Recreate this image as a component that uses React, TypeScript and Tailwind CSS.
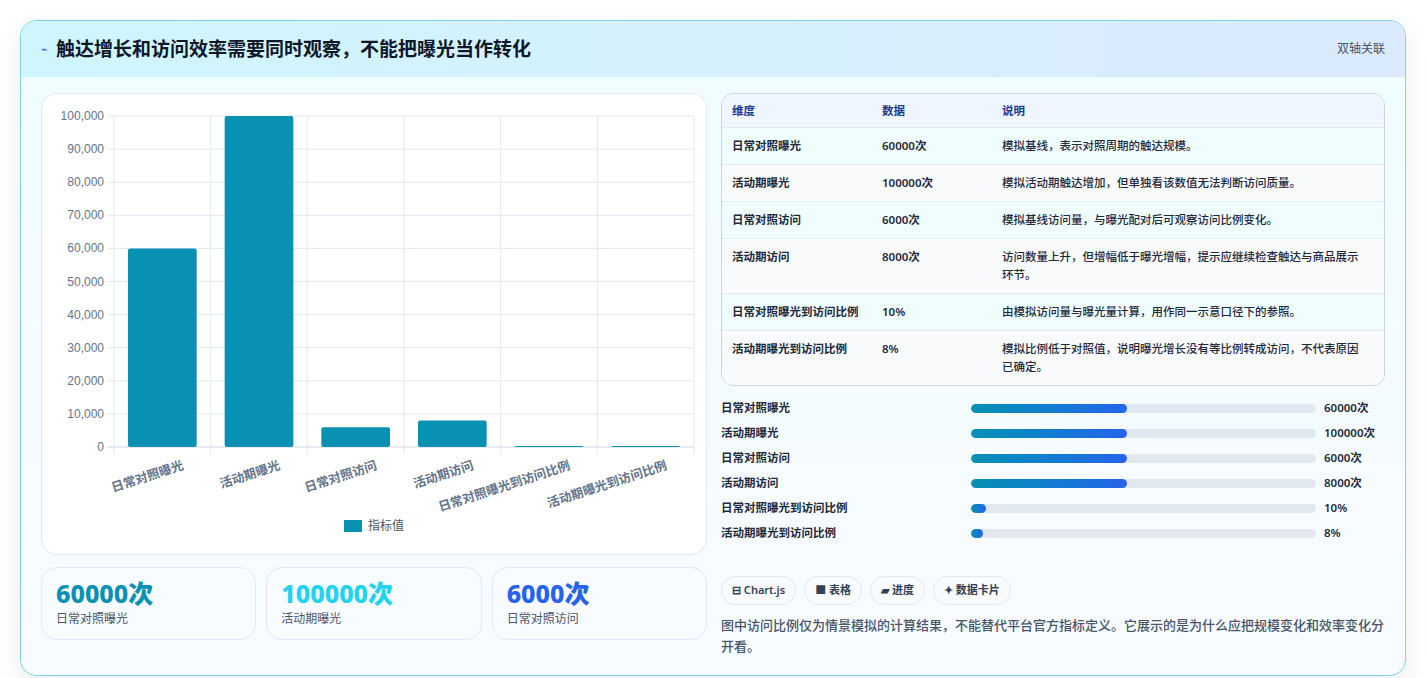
import React from "react";

const FONT = '"Noto Sans", "Noto Sans CJK SC", sans-serif';

const BARS = [
  { label: "日常对照曝光", value: 60000 },
  { label: "活动期曝光", value: 100000 },
  { label: "日常对照访问", value: 6000 },
  { label: "活动期访问", value: 8000 },
  { label: "日常对照曝光到访问比例", value: 10 },
  { label: "活动期曝光到访问比例", value: 8 },
];

const ROWS = [
  { d: "日常对照曝光", v: "60000次", n: "模拟基线，表示对照周期的触达规模。" },
  { d: "活动期曝光", v: "100000次", n: "模拟活动期触达增加，但单独看该数值无法判断访问质量。" },
  { d: "日常对照访问", v: "6000次", n: "模拟基线访问量，与曝光配对后可观察访问比例变化。" },
  { d: "活动期访问", v: "8000次", n: "访问数量上升，但增幅低于曝光增幅，提示应继续检查触达与商品展示环节。" },
  { d: "日常对照曝光到访问比例", v: "10%", n: "由模拟访问量与曝光量计算，用作同一示意口径下的参照。" },
  { d: "活动期曝光到访问比例", v: "8%", n: "模拟比例低于对照值，说明曝光增长没有等比例转成访问，不代表原因已确定。" },
];

const PROG = [
  { l: "日常对照曝光", v: "60000次", w: 156 },
  { l: "活动期曝光", v: "100000次", w: 156 },
  { l: "日常对照访问", v: "6000次", w: 156 },
  { l: "活动期访问", v: "8000次", w: 156 },
  { l: "日常对照曝光到访问比例", v: "10%", w: 15 },
  { l: "活动期曝光到访问比例", v: "8%", w: 12 },
];

function Chart() {
  const L = 72, T = 22, R = 652, B = 353;
  const cw = (R - L) / 6;
  const ticks = Array.from({ length: 11 }, (_, i) => i * 10000);
  const y = (v: number) => B - (v / 100000) * (B - T);
  return (
    <svg width="664" height="459" className="block">
      {ticks.map((t) => (
        <g key={t}>
          <line x1={L - 6} x2={R} y1={y(t)} y2={y(t)} stroke={t === 0 ? "#cbd5e1" : "#e2e8f0"} />
          <text x={L - 10} y={y(t) + 4} textAnchor="end" fontSize="12" fill="#64748b" fontFamily="Liberation Sans, sans-serif">
            {t.toLocaleString("en-US")}
          </text>
        </g>
      ))}
      {Array.from({ length: 7 }, (_, i) => (
        <line key={i} x1={L + i * cw} x2={L + i * cw} y1={T} y2={B + 7} stroke="#e2e8f0" />
      ))}
      {BARS.map((b, i) => {
        const x = L + i * cw + 14;
        const h = Math.max(1, (b.value / 100000) * (B - T));
        return (
          <g key={b.label}>
            <rect x={x} y={B - h} width={cw - 28} height={h} rx="2" fill="#0891b2" />
            <text
              transform={`translate(${L + i * cw + cw / 2 + 22} ${B + 22}) rotate(-18)`}
              textAnchor="end"
              fontSize="12.5"
              fontWeight="600"
              fill="#64748b"
              fontFamily={FONT}
            >
              {b.label}
            </text>
          </g>
        );
      })}
      <rect x="302" y="426" width="18" height="12" fill="#0891b2" />
      <text x="326" y="436" fontSize="12" fill="#475569" fontFamily={FONT}>指标值</text>
    </svg>
  );
}

export default function App() {
  return (
    <div className="min-h-[678px] bg-white p-5" style={{ fontFamily: FONT }}>
      <div className="rounded-2xl border border-[#7dd3e8] bg-gradient-to-b from-[#effdff] to-[#f8fbff] overflow-hidden shadow-[0_8px_24px_rgba(15,23,42,0.08)]">
        <div className="flex items-center justify-between h-[56px] px-5 bg-gradient-to-r from-[#cff6fd] to-[#dbeafe]">
          <div className="flex items-center gap-2">
            <span className="text-[11px] text-[#2563eb]">⌁</span>
            <h1 className="text-[19px] font-bold text-[#0f172a]">触达增长和访问效率需要同时观察，不能把曝光当作转化</h1>
          </div>
          <span className="text-[12px] text-[#475569]">双轴关联</span>
        </div>
        <div className="flex gap-[14px] px-5 pt-4 pb-[18px]">
          <div className="w-[666px] flex flex-col gap-3">
            <div className="h-[462px] rounded-2xl border border-[#e2e8f0] bg-white">
              <Chart />
            </div>
            <div className="grid grid-cols-3 gap-[10px]">
              {[
                { v: "60000次", l: "日常对照曝光", c: "text-[#0891b2]" },
                { v: "100000次", l: "活动期曝光", c: "text-[#22d3ee]" },
                { v: "6000次", l: "日常对照访问", c: "text-[#2563eb]" },
              ].map((s) => (
                <div key={s.l} className="h-[73px] rounded-2xl border border-[#dbeafe] bg-[#f8fbff] px-[14px] pt-[8px]">
                  <div className={`text-[25px] font-extrabold leading-[34px] ${s.c}`}>{s.v}</div>
                  <div className="text-[12px] text-[#475569]">{s.l}</div>
                </div>
              ))}
            </div>
          </div>
          <div className="flex-1 flex flex-col">
            <div className="rounded-xl border border-[#cbd5e1] overflow-hidden">
              <table className="w-full text-[11.5px] text-[#1e293b] border-collapse">
                <thead>
                  <tr className="bg-[#eff6ff] text-[#1e3a8a] h-[33px] text-left">
                    <th className="pl-[10px] w-[160px] font-semibold">维度</th>
                    <th className="w-[120px] font-semibold">数据</th>
                    <th className="font-semibold">说明</th>
                  </tr>
                </thead>
                <tbody>
                  {ROWS.map((r, i) => (
                    <tr key={r.d} className={`border-t border-[#e2e8f0] ${i % 2 === 0 ? "bg-[#f0fdff]" : "bg-[#f8fafc]"}`}>
                      <td className="pl-[10px] py-[9px] font-semibold align-top">{r.d}</td>
                      <td className="py-[9px] font-semibold align-top">{r.v}</td>
                      <td className="py-[9px] pr-4 leading-[18px] font-medium align-top">{r.n}</td>
                    </tr>
                  ))}
                </tbody>
              </table>
            </div>
            <div className="flex flex-col mt-[10px]">
              {PROG.map((p) => (
                <div key={p.l} className="flex items-center h-[25px] text-[11.5px] font-semibold text-[#1e293b]">
                  <span className="w-[250px]">{p.l}</span>
                  <div className="w-[345px] h-[9px] rounded-full bg-[#e2e8f0] overflow-hidden">
                    <div className="h-full rounded-full bg-gradient-to-r from-[#0891b2] to-[#2563eb]" style={{ width: p.w }} />
                  </div>
                  <span className="ml-2">{p.v}</span>
                </div>
              ))}
            </div>
            <div className="flex gap-2 mt-[30px]">
              {["⊟ Chart.js", "■ 表格", "▰ 进度", "✦ 数据卡片"].map((t) => (
                <span key={t} className="h-[29px] px-[10px] flex items-center rounded-full border border-[#e2e8f0] bg-[#f8fafc] text-[11px] font-semibold text-[#334155]">
                  {t}
                </span>
              ))}
            </div>
            <p className="mt-[10px] text-[13px] leading-[21px] text-[#475569] font-medium">
              图中访问比例仅为情景模拟的计算结果，不能替代平台官方指标定义。它展示的是为什么应把规模变化和效率变化分开看。
            </p>
          </div>
        </div>
      </div>
    </div>
  );
}
